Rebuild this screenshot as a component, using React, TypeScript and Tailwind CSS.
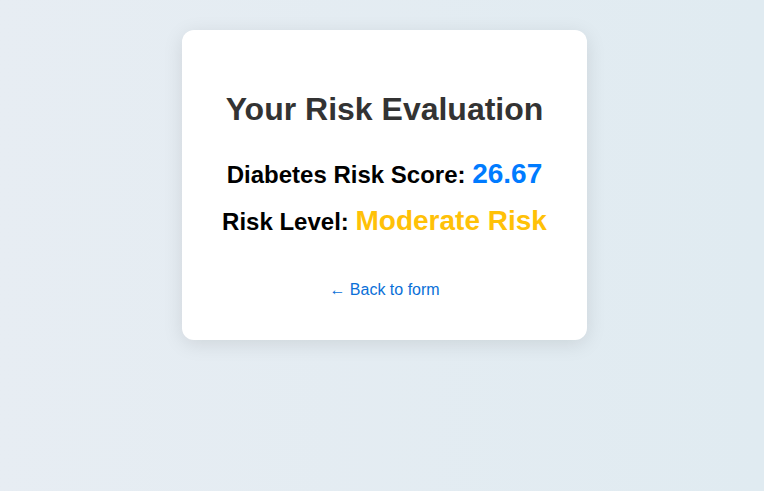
const App = () => {
  return (
    <div
      id="result-page"
      className="min-h-screen w-full flex justify-center items-start pt-[30px] pl-[5px] bg-linear-to-r from-[#e7edf3] to-[#e0ebf1] font-['Liberation_Sans',Arial,sans-serif]"
    >
      <div
        id="result-card"
        className="w-[405px] bg-white rounded-xl shadow-[0_4px_20px_rgba(0,0,0,0.1)] px-[40px] pt-[40px] pb-[38px] flex flex-col items-center text-center"
      >
        <h1 className="text-[32px] leading-[37px] font-bold text-[#333333] mt-[21px]">
          Your Risk Evaluation
        </h1>

        <div className="mt-[30px] text-[24px] leading-[32px] font-bold text-black whitespace-nowrap">
          Diabetes Risk Score:{" "}
          <span className="text-[28px] text-[#007bff]">26.67</span>
        </div>

        <div className="mt-[14px] text-[24px] leading-[32px] font-bold text-black whitespace-nowrap">
          Risk Level:{" "}
          <span className="text-[28px] text-[#ffc107]">Moderate Risk</span>
        </div>

        {/* back link */}
        <a
          href="#"
          className="mt-[40px] text-[16px] text-[#0a70d8] no-underline"
        >
          ← Back to form
        </a>
      </div>
    </div>
  );
};

export default App;
